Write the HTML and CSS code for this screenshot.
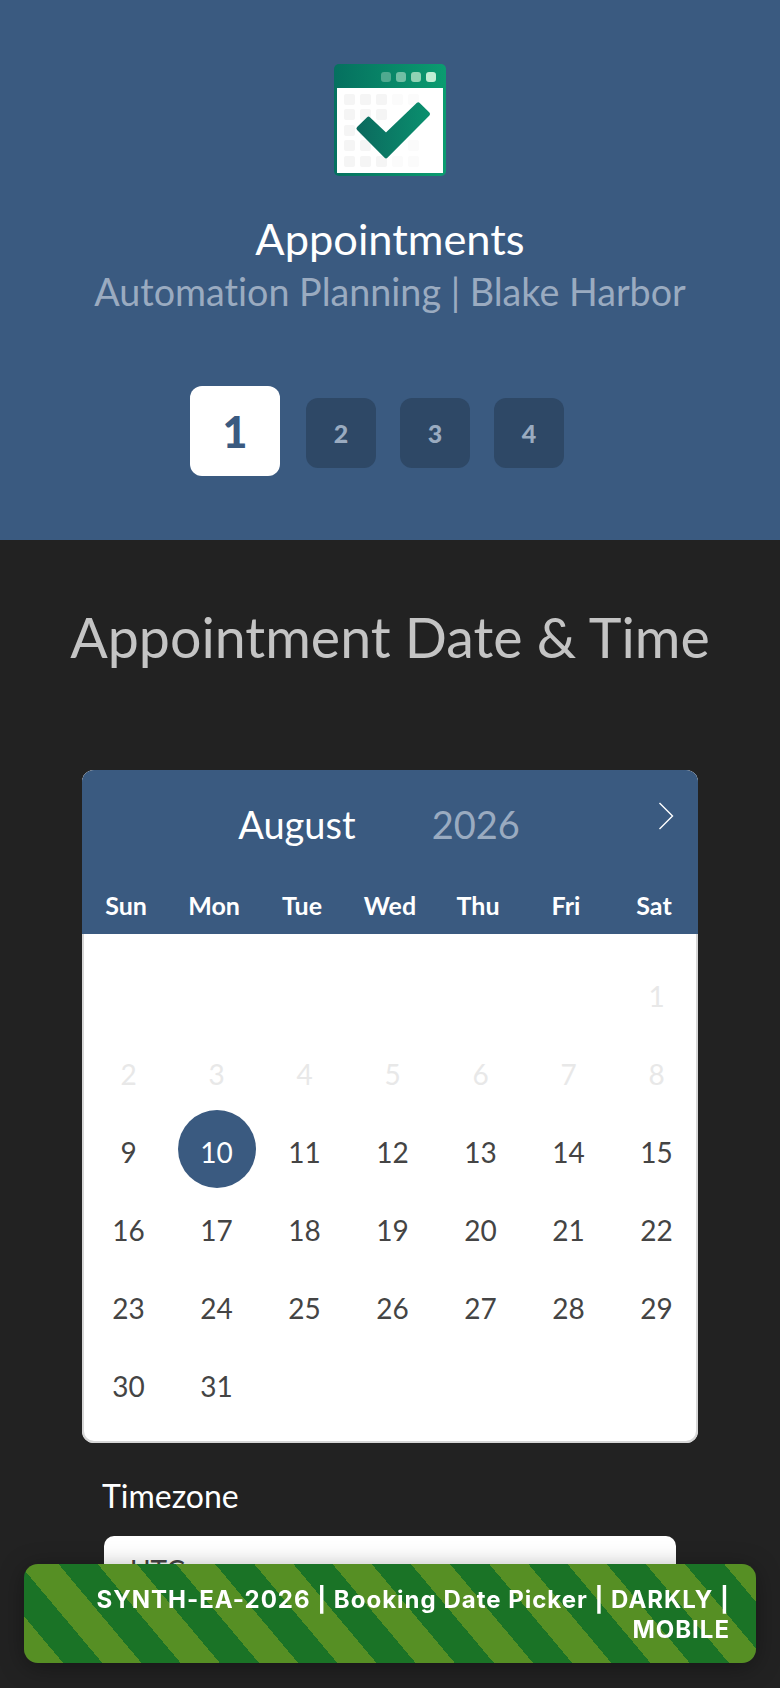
FILE: index.html
```html
<!DOCTYPE html>
<html lang="en">

<head>
  <meta name="viewport" content="width=device-width">
  <title>Appointments</title>
  <link rel="stylesheet" href="styles.css">
</head>

<body>
  <header class="hero">
    <svg class="logo" viewBox="0 0 112 112" width="112" height="112">
      <defs>
        <linearGradient id="green" x1="0" y1="0" x2="1" y2="0">
          <stop offset="0" stop-color="#05705f"/>
          <stop offset="1" stop-color="#0b9c70"/>
        </linearGradient>
        <linearGradient id="tick" x1="0" y1="0" x2="1" y2="0">
          <stop offset="0" stop-color="#0b6a5e"/>
          <stop offset="1" stop-color="#0a8f6e"/>
        </linearGradient>
      </defs>
      <rect x="0" y="0" width="112" height="112" rx="5" fill="url(#green)"/>
      <rect x="3" y="24" width="106" height="85" fill="#fff"/>
      <g fill="#f5f5f5">
        <rect x="10" y="30" width="11" height="11" rx="2"/>
        <rect x="26" y="30" width="11" height="11" rx="2"/>
        <rect x="42" y="30" width="11" height="11" rx="2"/>
        <rect x="10" y="45" width="11" height="11" rx="2"/>
        <rect x="26" y="45" width="11" height="11" rx="2"/>
        <rect x="42" y="45" width="11" height="11" rx="2"/>
        <rect x="10" y="61" width="11" height="11" rx="2"/>
        <rect x="26" y="61" width="11" height="11" rx="2"/>
        <rect x="10" y="76" width="11" height="11" rx="2"/>
        <rect x="26" y="76" width="11" height="11" rx="2"/>
        <rect x="10" y="92" width="11" height="11" rx="2"/>
        <rect x="26" y="92" width="11" height="11" rx="2"/>
        <rect x="42" y="92" width="11" height="11" rx="2"/>
      </g>
      <g fill="#fbfbfb">
        <rect x="58" y="30" width="11" height="11" rx="2"/>
        <rect x="74" y="30" width="11" height="11" rx="2"/>
        <rect x="74" y="76" width="11" height="11" rx="2"/>
        <rect x="58" y="92" width="11" height="11" rx="2"/>
        <rect x="74" y="92" width="11" height="11" rx="2"/>
      </g>
      <rect x="47" y="8" width="10" height="10" rx="3" fill="#4fa98f"/>
      <rect x="62" y="8" width="10" height="10" rx="3" fill="#70bfa4"/>
      <rect x="77" y="8" width="10" height="10" rx="3" fill="#8fd3b4"/>
      <rect x="92" y="8" width="10" height="10" rx="3" fill="#c0eed4"/>
      <path d="M24.5 64.5 L34.5 54.7 L52 71.3 L84.3 40.3 L94 50 L52 92.3 Z" fill="url(#tick)" stroke="url(#tick)" stroke-width="4" stroke-linejoin="round"/>
    </svg>
    <h1 class="hero-title">Appointments</h1>
    <p class="hero-sub">Automation Planning | Blake Harbor</p>
    <ol class="steps">
      <li class="step step-on">1</li>
      <li class="step">2</li>
      <li class="step">3</li>
      <li class="step">4</li>
    </ol>
  </header>

  <main class="content">
    <h2 class="page-title">Appointment Date &amp; Time</h2>

    <section class="cal">
      <div class="cal-head">
        <div class="cal-month">
          <span class="month">August</span>
          <span class="year">2026</span>
          <svg class="next" viewBox="0 0 16 28" width="16" height="28">
            <path d="M1.5 1 L14.5 14 L1.5 27" fill="none" stroke="#fff" stroke-width="1.4"/>
          </svg>
        </div>
        <div class="cal-row cal-days">
          <span>Sun</span><span>Mon</span><span>Tue</span><span>Wed</span><span>Thu</span><span>Fri</span><span>Sat</span>
        </div>
      </div>
      <div class="cal-body">
        <span></span><span></span><span></span><span></span><span></span><span></span><span class="off">1</span>
        <span class="off">2</span><span class="off">3</span><span class="off">4</span><span class="off">5</span><span class="off">6</span><span class="off">7</span><span class="off">8</span>
        <span>9</span><span class="picked">10</span><span>11</span><span>12</span><span>13</span><span>14</span><span>15</span>
        <span>16</span><span>17</span><span>18</span><span>19</span><span>20</span><span>21</span><span>22</span>
        <span>23</span><span>24</span><span>25</span><span>26</span><span>27</span><span>28</span><span>29</span>
        <span>30</span><span>31</span>
      </div>
    </section>

    <label class="tz-label" for="tz">Timezone</label>
    <div class="tz-input" id="tz">UTC</div>
  </main>

  <div class="banner">SYNTH-EA-2026 | Booking Date Picker | DARKLY | MOBILE</div>
</body>

</html>
```
FILE: styles.css
```css
html {
  height: 100%;
  overflow: hidden;
}

body {
  margin: 0;
  height: 1688px;
  overflow: hidden;
  background: #222222;
  font-family: "Lato", sans-serif;
  font-variant-ligatures: none;
}

.hero {
  height: 540px;
  box-sizing: border-box;
  padding-top: 64px;
  background: #3a5a80;
  display: flex;
  flex-direction: column;
  align-items: center;
}

.logo {
  display: block;
}

.hero-title {
  margin: 36px 0 0;
  font-size: 43.4px;
  line-height: 52px;
  font-weight: 400;
  color: #fff;
}

.hero-sub {
  margin: 2px 0 0;
  font-size: 37.7px;
  line-height: 52px;
  color: #9aabc0;
}

.steps {
  list-style: none;
  margin: 68px 26px 0 0;
  padding: 0;
  display: flex;
  align-items: flex-start;
  gap: 24px;
}

.step {
  width: 70px;
  height: 70px;
  margin-top: 12px;
  border-radius: 12px;
  background: #2e4866;
  color: #9aabc0;
  font-size: 25px;
  font-weight: 900;
  display: flex;
  align-items: center;
  justify-content: center;
}

.step-on {
  width: 90px;
  height: 90px;
  margin: 0 2px 0 0;
  background: #fff;
  color: #3a5a80;
  font-size: 43px;
}

.content {
  display: flex;
  flex-direction: column;
}

.page-title {
  margin: 63px 0 0;
  text-align: center;
  font-size: 55.5px;
  line-height: 68px;
  font-weight: 400;
  color: #c4c4c4;
}

.cal {
  margin: 99px 82px 0;
  border-radius: 12px;
  overflow: hidden;
  background: #fff;
  box-shadow: inset 0 0 0 2px #d6d6d6;
}

.cal-head {
  background: #3a5a80;
  height: 164px;
}

.cal-month {
  position: relative;
  height: 120px;
  padding: 0 22px 12px 0;
  box-sizing: border-box;
  display: flex;
  justify-content: center;
  align-items: center;
  gap: 76px;
  font-size: 38px;
}

.month {
  color: #fff;
}

.year {
  color: #9aabc0;
}

.next {
  position: absolute;
  right: 24px;
  top: 32px;
}

.cal-row,
.cal-body {
  display: grid;
  grid-template-columns: repeat(7, 88px);
}

.cal-days {
  color: #fff;
  font-size: 25px;
  font-weight: 700;
  line-height: 30px;
  text-align: center;
}

.cal-body {
  padding: 20px 0 21px;
  grid-auto-rows: 78px;
  text-align: center;
  font-size: 28px;
  color: #444444;
}

.cal-body span {
  display: flex;
  align-items: center;
  justify-content: center;
  box-sizing: border-box;
  padding-top: 6px;
  margin-left: 5px;
}

.cal-body .off {
  color: #e8e8e8;
}

.cal-body .picked {
  width: 78px;
  height: 78px;
  justify-self: center;
  border-radius: 50%;
  background: #3a5a80;
  color: #fff;
}

.tz-label {
  margin: 33px 0 0 102px;
  font-size: 32px;
  line-height: 40px;
  color: #fff;
}

.tz-input {
  margin: 20px 104px 0;
  height: 80px;
  box-sizing: border-box;
  padding: 17px 26px;
  border-radius: 10px;
  background: #fff;
  font-size: 28px;
  color: #444444;
}

.banner {
  position: fixed;
  left: 24px;
  right: 24px;
  bottom: 25px;
  height: 99px;
  box-sizing: border-box;
  padding: 21px 26px 0;
  border-radius: 14px;
  text-align: right;
  font-family: "Inter", sans-serif;
  font-size: 24px;
  line-height: 30px;
  font-weight: 700;
  letter-spacing: 1px;
  color: #fff;
  background: repeating-linear-gradient(50deg, #568f24 0 30px, #1a7326 30px 60px);
  box-shadow: 0 4px 24px rgba(0, 0, 0, 0.35);
}
```
